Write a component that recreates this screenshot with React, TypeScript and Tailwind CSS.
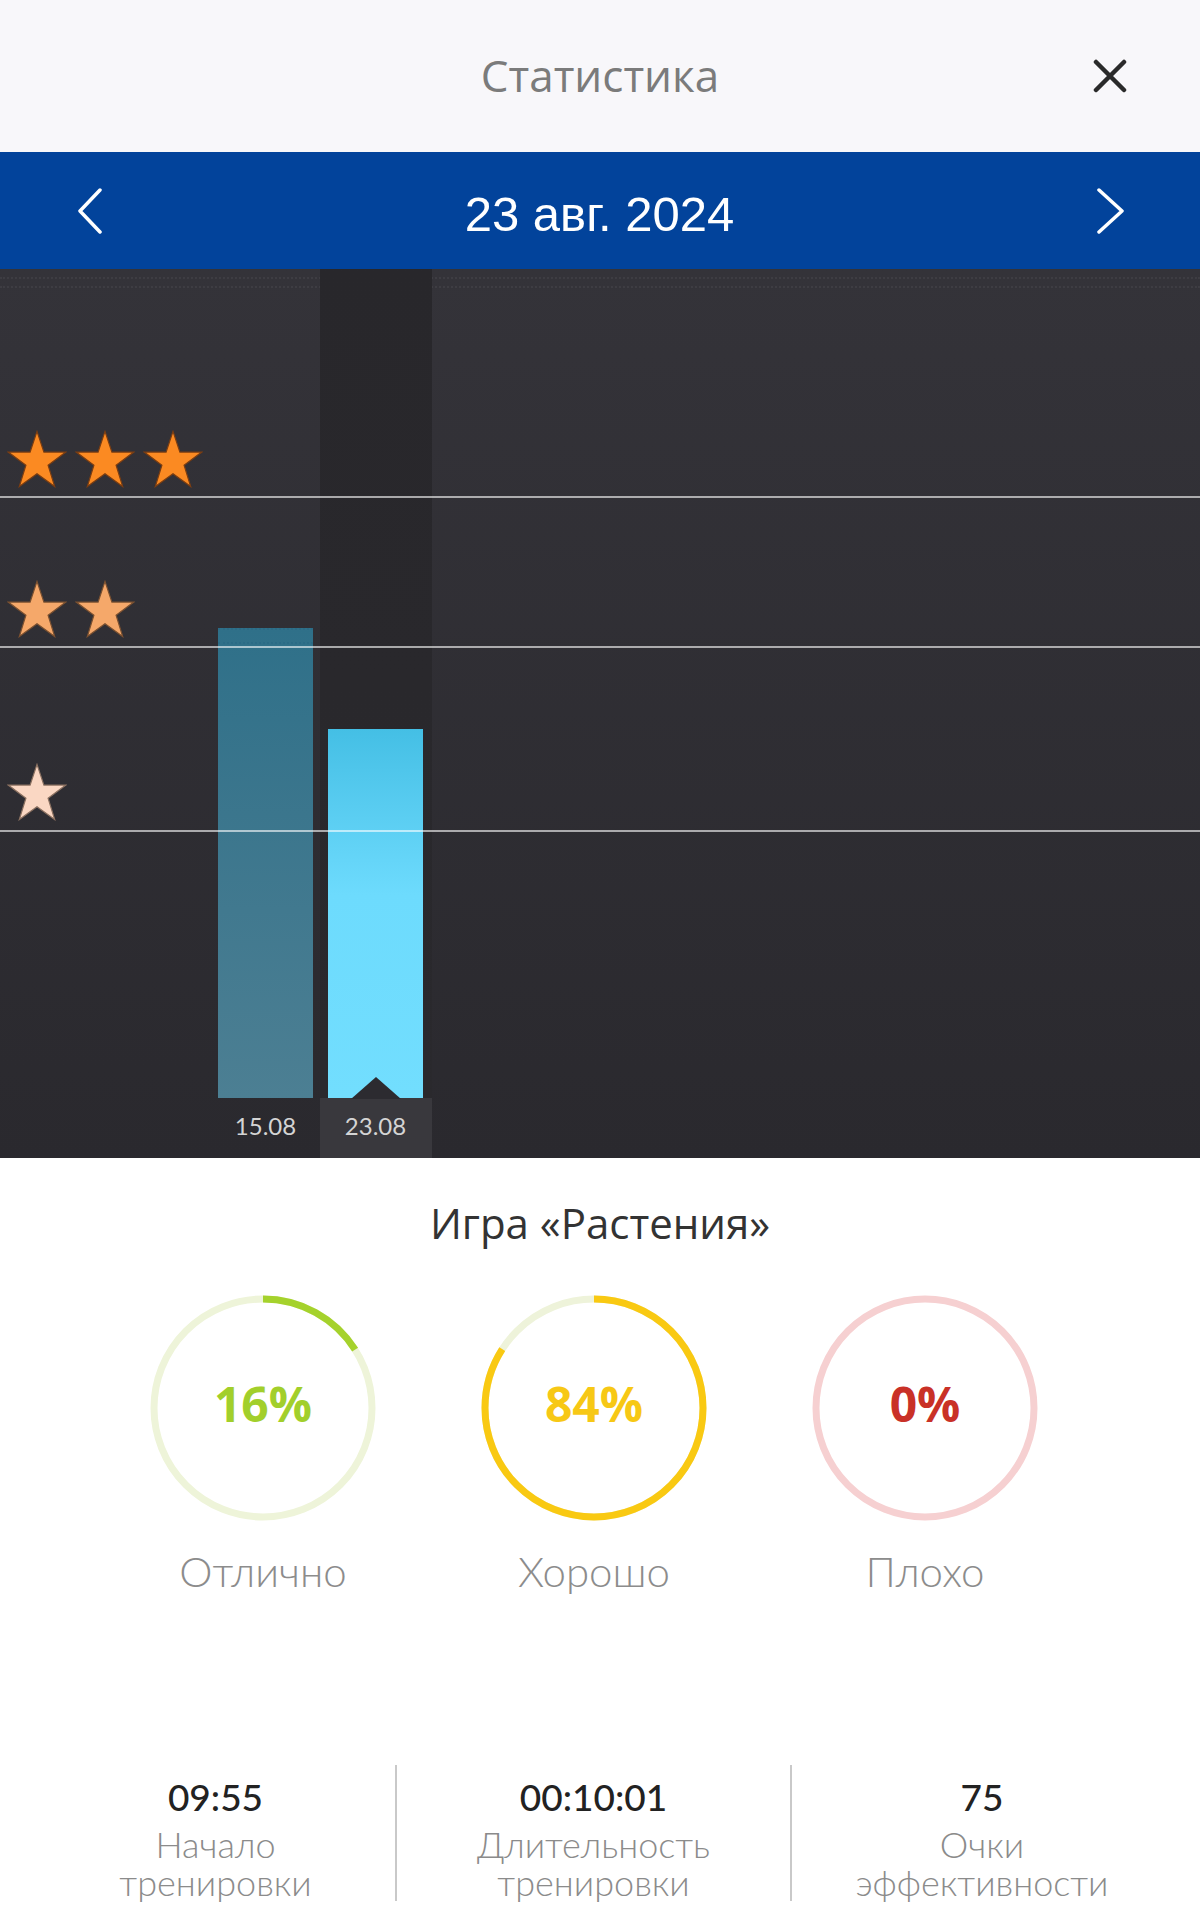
import React from 'react';

const STAR_POINTS = '50,2 61.5,36.5 98,36.5 68.5,58.5 79.5,94 50,72.5 20.5,94 31.5,58.5 2,36.5 38.5,36.5';

function Star({ color, edge }: { color: string; edge: string }) {
  return (
    <svg width="60" height="58" viewBox="0 0 100 96">
      <polygon points={STAR_POINTS} fill={color} stroke={edge} strokeWidth="2" strokeLinejoin="miter" />
    </svg>
  );
}

function StarRow({ count, color, edge }: { count: number; color: string; edge: string }) {
  return (
    <div className="flex gap-[8px]">
      {Array.from({ length: count }).map((_, i) => (
        <Star key={i} color={color} edge={edge} />
      ))}
    </div>
  );
}

interface RingProps {
  value: number;
  track: string;
  stroke: string;
  text: string;
  label: string;
}

function Ring({ value, track, stroke, text, label }: RingProps) {
  const r = 109;
  const c = 2 * Math.PI * r;
  return (
    <div className="flex flex-col items-center">
      <div className="relative w-[230px] h-[230px]">
        <svg width="230" height="230" viewBox="0 0 230 230" className="-rotate-90">
          <circle cx="115" cy="115" r={r} fill="none" stroke={track} strokeWidth="7" />
          {value > 0 && (
            <circle
              cx="115"
              cy="115"
              r={r}
              fill="none"
              stroke={stroke}
              strokeWidth="7"
              strokeDasharray={`${(c * value) / 100} ${c}`}
            />
          )}
        </svg>
        <div
          className="absolute inset-0 flex items-center justify-center pb-[8px] text-[48px] font-bold leading-none"
          style={{ color: text, fontFamily: '"Open Sans", sans-serif' }}
        >
          {value}%
        </div>
      </div>
      <div className="mt-[24px] text-[42px] leading-[48px] font-light text-[#8c8c8c] [font-family:Lato,sans-serif]">
        {label}
      </div>
    </div>
  );
}

function StatCol({ value, lines, width }: { value: string; lines: string[]; width: string }) {
  return (
    <div className={`flex flex-col items-center pt-[10px] ${width}`}>
      <div className="text-[37px] leading-[44px] font-medium text-[#222] [font-family:Lato,sans-serif]">{value}</div>
      <div className="mt-[6px] flex flex-col items-center text-[36px] leading-[38px] font-light text-[#8b8b8b] [font-family:Lato,sans-serif]">
        {lines.map((l) => (
          <span key={l}>{l}</span>
        ))}
      </div>
    </div>
  );
}

export default function App() {
  return (
    <div className="w-[1200px] h-[1920px] bg-white overflow-hidden">
      {/* Header */}
      <div className="h-[152px] bg-[#f8f7fa] grid grid-cols-[1fr_auto_1fr] items-center">
        <div />
        <h1 className="text-[44px] text-[#7b7b7b] [font-family:'Open_Sans',sans-serif] pb-[2px]">Статистика</h1>
        <div className="flex justify-end pr-[73px]">
          <svg width="34" height="34" viewBox="0 0 34 34">
            <path d="M3 3 L31 31 M31 3 L3 31" stroke="#2a2a2a" strokeWidth="4.5" strokeLinecap="round" />
          </svg>
        </div>
      </div>

      {/* Date switcher */}
      <div className="h-[117px] bg-[#02439b] flex items-center justify-between pl-[77px] pr-[75px]">
        <svg width="26" height="46" viewBox="0 0 26 46">
          <path d="M23 2 L3 23 L23 44" fill="none" stroke="#fff" strokeWidth="3.5" strokeLinecap="round" strokeLinejoin="round" />
        </svg>
        <div className="text-[49px] text-white [font-family:'Liberation_Sans',Arial,sans-serif] pt-[8px]">23 авг. 2024</div>
        <svg width="29" height="46" viewBox="0 0 29 46">
          <path d="M3 2 L26 23 L3 44" fill="none" stroke="#fff" strokeWidth="3.5" strokeLinecap="round" strokeLinejoin="round" />
        </svg>
      </div>

      {/* Chart */}
      <div className="relative h-[889px] bg-gradient-to-b from-[#343339] to-[#2a292e] overflow-hidden">
        <div className="absolute left-0 right-0 top-[8px] border-t-2 border-dotted border-white/5" />
        <div className="absolute left-0 right-0 top-[17px] border-t-2 border-dotted border-white/5" />

        {/* selected day column */}
        <div className="absolute left-[320px] w-[112px] top-0 h-[829px] bg-gradient-to-b from-[#28272b] to-[#2a292d]" />
        <div className="absolute left-[320px] w-[112px] top-[829px] bottom-0 bg-[#39383d]" />

        {/* stars */}
        <div className="absolute left-[7px] top-[161px]">
          <StarRow count={3} color="#fb8a22" edge="#7a3d12" />
        </div>
        <div className="absolute left-[7px] top-[311px]">
          <StarRow count={2} color="#f5a86a" edge="#7a5030" />
        </div>
        <div className="absolute left-[7px] top-[494px]">
          <StarRow count={1} color="#fad7c3" edge="#8a7060" />
        </div>

        {/* bars */}
        <div className="absolute left-[218px] w-[95px] top-[359px] h-[470px] bg-gradient-to-b from-[#2f7089] to-[#4c7f93]">
          <div className="h-[16px] border-t-2 border-b-2 border-dotted border-[#2a6a84]/70" />
        </div>
        <div className="absolute left-[328px] w-[95px] top-[460px] h-[369px] bg-gradient-to-b from-[#44bfe5] via-[#6ddbfd] via-45% to-[#72defe]" />
        <svg className="absolute left-[351px] top-[808px]" width="50" height="22" viewBox="0 0 50 22">
          <polygon points="0,22 25,0 50,22" fill="#2c2b30" />
        </svg>

        {/* grid lines */}
        <div className="absolute left-0 right-0 top-[227px] h-[2px] bg-white/60" />
        <div className="absolute left-0 right-0 top-[377px] h-[2px] bg-white/60" />
        <div className="absolute left-0 right-0 top-[561px] h-[2px] bg-white/60" />

        {/* day labels */}
        <div className="absolute top-[827px] h-[60px] left-[218px] w-[95px] flex items-center justify-center text-[24px] text-[#d4d4d4] [font-family:Lato,sans-serif]">
          15.08
        </div>
        <div className="absolute top-[827px] h-[60px] left-[328px] w-[95px] flex items-center justify-center text-[24px] text-[#d4d4d4] [font-family:Lato,sans-serif]">
          23.08
        </div>
      </div>

      {/* Results */}
      <div className="pt-[42px] flex flex-col items-center">
        <h2 className="text-[42px] leading-[46px] text-[#333] [font-family:'Open_Sans',sans-serif]">Игра «Растения»</h2>
        <div className="mt-[47px] w-full flex pl-[148px] gap-[101px]">
          <Ring value={16} track="#eef4d9" stroke="#a5d22c" text="#a2cf2b" label="Отлично" />
          <Ring value={84} track="#eef3da" stroke="#f9c912" text="#f7c815" label="Хорошо" />
          <Ring value={0} track="#f6d0d1" stroke="#c83228" text="#c93127" label="Плохо" />
        </div>
      </div>

      {/* Totals */}
      <div className="mt-[170px] flex pl-[36px]">
        <StatCol value="09:55" lines={['Начало', 'тренировки']} width="w-[359px]" />
        <div className="w-[2px] h-[136px] bg-[#c9c9c9]" />
        <StatCol value="00:10:01" lines={['Длительность', 'тренировки']} width="w-[393px]" />
        <div className="w-[2px] h-[136px] bg-[#c9c9c9]" />
        <StatCol value="75" lines={['Очки', 'эффективности']} width="w-[380px]" />
      </div>
    </div>
  );
}
